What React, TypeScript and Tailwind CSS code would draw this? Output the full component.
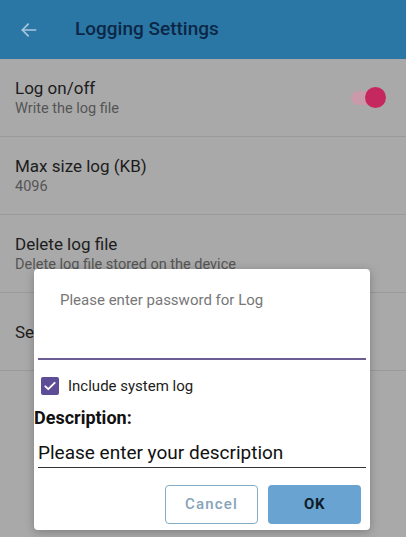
import React from "react";

function Row({ title, sub, right }: { title: string; sub?: string; right?: React.ReactNode }) {
  return (
    <div className="h-[78px] flex items-center justify-between px-[15px] border-b border-[#9a9a9a]">
      <div className="flex flex-col">
        <div className="text-[17px] leading-[22px] text-[#1c1c1c]">{title}</div>
        {sub && <div className="text-[14.5px] leading-[20px] text-[#555555]">{sub}</div>}
      </div>
      {right}
    </div>
  );
}

export default function App() {
  return (
    <div className="relative w-[406px] h-[537px] overflow-hidden bg-[#a9a9a9]" style={{ fontFamily: "Roboto, 'Noto Sans', sans-serif" }}>
      <div className="h-[59px] bg-[#2a77a6] flex items-center">
        <div className="w-[75px] pl-[19px] flex items-center">
          <svg width="20" height="20" viewBox="0 0 24 24" fill="none" stroke="#a9c9dd" strokeWidth="2" strokeLinecap="round" strokeLinejoin="round">
            <path d="M20 12H4" />
            <path d="M11 5l-7 7 7 7" />
          </svg>
        </div>
        <div className="text-[19px] font-medium text-[#0c2745]">Logging Settings</div>
      </div>
      <Row
        title="Log on/off"
        sub="Write the log file"
        right={
          <div className="relative w-[34px] h-[22px] mr-[6px] flex items-center">
            <div className="absolute left-[0px] w-[30px] h-[14px] rounded-full bg-[#c99aaa]" />
            <div className="absolute right-[-1px] w-[21px] h-[21px] rounded-full bg-[#c5285e]" />
          </div>
        }
      />
      <Row title="Max size log (KB)" sub="4096" />
      <Row title="Delete log file" sub="Delete log file stored on the device" />
      <Row title="Send log file" sub="" />

      <div className="absolute left-[34px] top-[269px] w-[336px] h-[261px] bg-white rounded-[4px] shadow-[0_2px_10px_rgba(0,0,0,0.25)]">
        <div className="mx-[4px] pt-[20px] h-[91px] border-b-2 border-[#6b5d94]">
          <div className="pl-[22px] text-[15px] leading-[22px] text-[#777777]">Please enter password for Log</div>
        </div>
        <div className="flex items-center mt-[16px] pl-[7px]">
          <div className="w-[18px] h-[18px] rounded-[2px] bg-[#5d4d96] flex items-center justify-center">
            <svg width="14" height="14" viewBox="0 0 24 24" fill="none" stroke="white" strokeWidth="3.2" strokeLinecap="round" strokeLinejoin="round">
              <path d="M4 12.5l5 5L20 6.5" />
            </svg>
          </div>
          <div className="ml-[9px] text-[15px] leading-[20px] text-[#1c1c1c]">Include system log</div>
        </div>
        <div className="mt-[10px] text-[18px] leading-[24px] font-bold text-[#111111]">Description:</div>
        <div className="mx-[4px] mt-[10px] h-[28px] border-b border-[#333333] text-[19px] leading-[26px] text-[#111111]">
          Please enter your description
        </div>
        <div className="flex justify-end gap-[10px] mt-[17px] pr-[9px]">
          <button className="w-[93px] h-[39px] rounded-[4px] border border-[#84adc4] bg-white text-[15px] font-medium tracking-[1.2px] text-[#86a4b9]">
            Cancel
          </button>
          <button className="w-[93px] h-[39px] rounded-[4px] bg-[#68a3d1] text-[15px] font-bold tracking-[0.5px] text-[#0f1c2a]">
            OK
          </button>
        </div>
      </div>
    </div>
  );
}
